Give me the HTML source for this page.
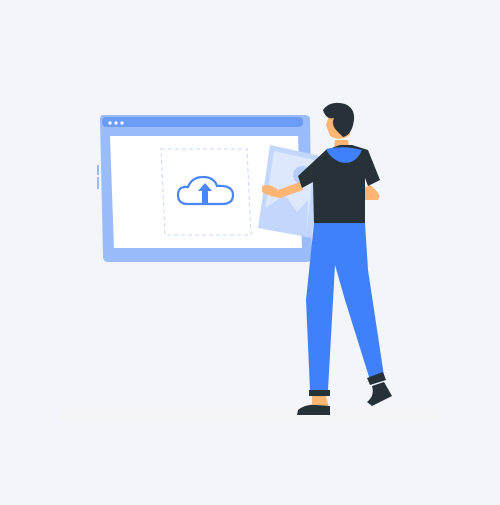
<!DOCTYPE html>
<html><head><style>body{margin:0;background:#f2f5fa}</style></head><body>
<svg width="500" height="500" viewBox="0 0 500 500" xmlns="http://www.w3.org/2000/svg">
<rect width="500" height="500" fill="#f2f5fa"/>
<rect x="60" y="407" width="380" height="14" fill="#f5f5f7"/>
<rect x="97" y="165" width="2" height="10" fill="#9bbcfb"/>
<rect x="97" y="177" width="2" height="12" fill="#9bbcfb"/>
<path d="M103 115 H305 Q310 115 310 120 L312 256 Q312 262 306 262 H108 Q103 262 103 256 L100 120 Q100 115 103 115Z" fill="#9bbcfb"/>
<rect x="102" y="117" width="201" height="10" rx="4" fill="#6b9cf8"/>
<circle cx="110" cy="123" r="1.6" fill="#fff"/><circle cx="116" cy="123" r="1.6" fill="#fff"/><circle cx="122" cy="123" r="1.6" fill="#fff"/>
<path d="M110 136 H298 L302 248 H114Z" fill="#fff"/>
<path d="M161 149 H247 L251 235 H165Z" fill="none" stroke="#c9d8fb" stroke-width="1" stroke-dasharray="4 3"/>
<path d="M188 204 Q178 204 178 195 Q178 186 188 187 Q192 177 203 177 Q214 177 217 186 Q233 185 233 195 Q233 204 222 204 Z" fill="none" stroke="#4a86f7" stroke-width="2.2"/>
<path d="M205 183 L212 191 H208 V204 H202 V191 H198Z" fill="#4a86f7"/>
<path d="M270 145 L320 156 L312 238 L258 228Z" fill="#c3d6fc"/>
<path d="M274 151 L314 160 L307 231 L263 223Z" fill="#dde8fd"/>
<circle cx="302" cy="175" r="9" fill="#b5cdfb"/>
<path d="M265 208 L285 195 L297 212 L308 200 L307 231 L263 223Z" fill="#c3d6fc"/>
<path d="M262 186 Q270 183 278 190 L300 182 L303 190 L280 198 Q268 196 262 192Z" fill="#ffb573"/>
<path d="M370 185 Q383 195 378 200 L362 200 L360 190Z" fill="#ffb573"/>
<path d="M335 140 L348 140 L350 155 L333 155Z" fill="#ffb573"/>
<path d="M330 112 Q342 104 350 112 L350 135 Q340 142 330 136 L326 125Z" fill="#ffb573"/>
<path d="M323 110 Q330 100 345 104 Q355 108 354 120 Q352 135 343 137 L336 130 Q331 124 334 118 Q326 120 323 110Z" fill="#263238"/>
<path d="M326 150 L340 145 L352 145 L368 150 L380 180 L368 186 L365 178 L365 224 L314 224 L313 182 L302 188 L298 176 Z" fill="#263238"/>
<path d="M326 149 Q345 145 362 150 Q355 166 340 162 Q330 158 326 149Z" fill="#4080fb"/>
<path d="M314 223 H365 L368 270 L384 376 L370 380 L345 300 L335 265 L328 390 H310 L306 300Z" fill="#4080fb"/>
<rect x="309" y="390" width="21" height="6" fill="#263238"/>
<path d="M367 378 L383 372 L386 380 L370 385Z" fill="#263238"/>
<path d="M312 396 H326 L328 404 L330 414 H298 Q298 408 312 404Z" fill="#ffb573"/>
<path d="M298 410 Q305 404 316 405 L330 406 L330 415 H297Z" fill="#263238"/>
<path d="M372 386 L384 382 L392 396 L372 406 L367 402 Q375 396 372 386Z" fill="#263238"/>
</svg>
</body></html>
